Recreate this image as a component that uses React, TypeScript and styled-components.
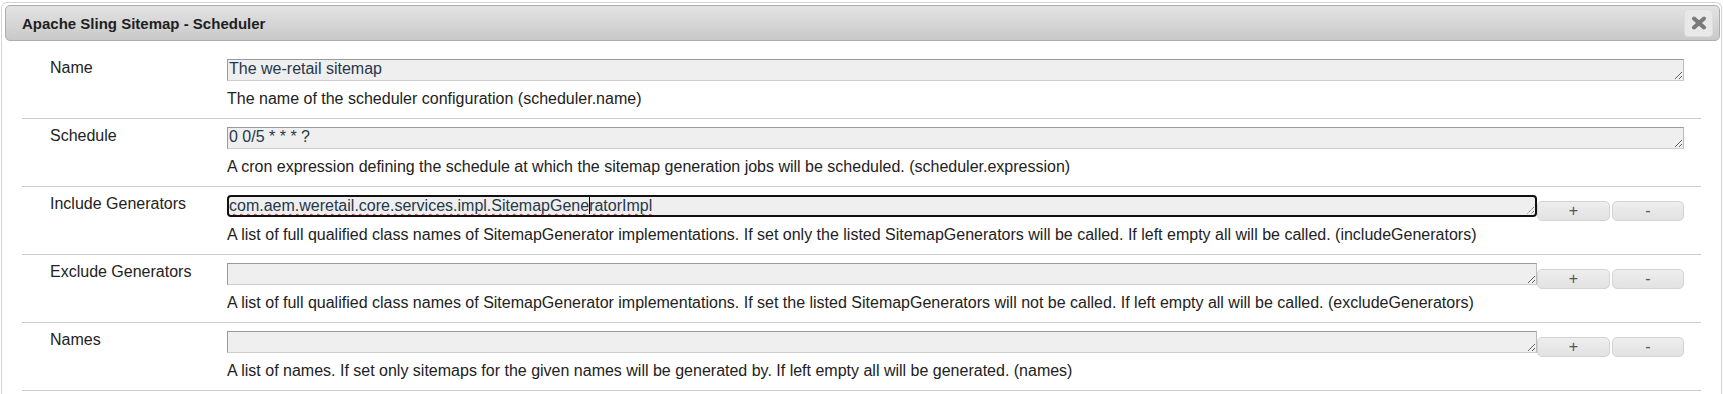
import React from "react";
import styled, { createGlobalStyle } from "styled-components";

const Global = createGlobalStyle`
  html, body { margin: 0; padding: 0; background: #fff; }
  body {
    font-family: "Liberation Sans", Arial, sans-serif;
    width: 1723px;
    height: 394px;
    overflow: hidden;
  }
`;

const Dialog = styled.div`
  box-sizing: border-box;
  width: 1721px;
  height: 392px;
  margin: 2px 1px 0 1px;
  border: 1px solid #d4d4d4;
  border-bottom: none;
  border-radius: 6px 6px 0 0;
  padding: 2px 1px 0 3px;
  background: #fff;
  overflow: hidden;
`;

const TitleBar = styled.div`
  box-sizing: border-box;
  height: 36px;
  display: flex;
  align-items: center;
  justify-content: space-between;
  padding: 0 6px 0 16px;
  border: 1px solid #acacac;
  border-radius: 5px;
  background: linear-gradient(#e3e3e3, #c9c9c9);
`;

const Title = styled.span`
  font-size: 15px;
  font-weight: bold;
  color: #1e1e1e;
`;

const CloseButton = styled.div`
  box-sizing: border-box;
  width: 29px;
  height: 28px;
  display: flex;
  align-items: center;
  justify-content: center;
  border: 1px solid #dcdcdc;
  border-radius: 4px;
  background: #e8e8e8;
`;

const Content = styled.div`
  padding: 10px 19px 0 17px;
`;

const Row = styled.div`
  display: grid;
  grid-template-columns: 205px 1fr;
  padding: 8px 0 10px 0;
  border-bottom: 1px solid #cccccc;
`;

const Label = styled.div`
  padding: 0 0 0 28px;
  font-size: 16px;
  line-height: 18px;
  color: #222;
`;

const ValueCell = styled.div`
  display: flex;
  flex-direction: column;
  padding-right: 16px;
`;

const FieldLine = styled.div`
  display: flex;
  height: 22px;
  align-items: flex-start;
`;

const TextField = styled.textarea<{ $w: number }>`
  box-sizing: border-box;
  width: ${(p) => p.$w}px;
  height: 22px;
  margin: 0;
  padding: 0 1px;
  border: 1px solid;
  border-color: #9a9a9a #bcbcbc #cdcdcd #9a9a9a;
  background: #efefef;
  font-family: "Liberation Sans", Arial, sans-serif;
  font-size: 16px;
  line-height: 18px;
  color: #26384a;
  resize: vertical;
  overflow: hidden;
  white-space: nowrap;
  outline: none;
`;

const FocusedField = styled.div<{ $w: number }>`
  position: relative;
  box-sizing: border-box;
  width: ${(p) => p.$w}px;
  height: 22px;
  padding: 0;
  border: 2px solid #111;
  border-radius: 4px;
  background: #efefef;
  font-size: 16px;
  line-height: 18px;
  color: #26384a;
  white-space: nowrap;
  overflow: hidden;
`;

const Misspelled = styled.span`
  text-decoration: underline wavy #e0201a;
  text-decoration-thickness: 1px;
  text-underline-offset: 2px;
  text-decoration-skip-ink: none;
`;

const Caret = styled.span`
  display: inline-block;
  width: 1px;
  height: 17px;
  margin-right: -1px;
  background: #000;
  vertical-align: -3px;
`;

const Grip = styled.svg`
  position: absolute;
  right: 0;
  bottom: 0;
`;

const SmallButton = styled.button`
  box-sizing: border-box;
  width: 73px;
  height: 20px;
  margin: 6px 0 0 0;
  padding: 0;
  border: 1px solid #d3d3d3;
  border-radius: 5px;
  background: linear-gradient(#eeeeee, #e2e2e2);
  font-family: "Liberation Sans", Arial, sans-serif;
  font-size: 16px;
  line-height: 18px;
  color: #555;
  & + & {
    margin-left: 2px;
    width: 72px;
  }
`;

const Description = styled.div`
  margin-top: 9px;
  font-size: 16px;
  line-height: 18px;
  color: #222;
`;

type Field = {
  label: string;
  value: string;
  desc: string;
  multi?: boolean;
  focused?: boolean;
};

const fields: Field[] = [
  {
    label: "Name",
    value: "The we-retail sitemap",
    desc: "The name of the scheduler configuration (scheduler.name)",
  },
  {
    label: "Schedule",
    value: "0 0/5 * * * ?",
    desc: "A cron expression defining the schedule at which the sitemap generation jobs will be scheduled. (scheduler.expression)",
  },
  {
    label: "Include Generators",
    value: "com.aem.weretail.core.services.impl.SitemapGeneratorImpl",
    desc: "A list of full qualified class names of SitemapGenerator implementations. If set only the listed SitemapGenerators will be called. If left empty all will be called. (includeGenerators)",
    multi: true,
    focused: true,
  },
  {
    label: "Exclude Generators",
    value: "",
    desc: "A list of full qualified class names of SitemapGenerator implementations. If set the listed SitemapGenerators will not be called. If left empty all will be called. (excludeGenerators)",
    multi: true,
  },
  {
    label: "Names",
    value: "",
    desc: "A list of names. If set only sitemaps for the given names will be generated by. If left empty all will be generated. (names)",
    multi: true,
  },
];

const CloseIcon = () => (
  <svg width="16" height="14" viewBox="0 0 16 14">
    <path d="M3 2.5 L13 11.5 M13 2.5 L3 11.5" stroke="#7a7a7a" strokeWidth="4" strokeLinecap="round" />
  </svg>
);

const GripIcon = () => (
  <Grip width="9" height="9" viewBox="0 0 9 9">
    <path d="M8 1 L1 8 M8 5 L5 8" stroke="#4a4a4a" strokeWidth="1" strokeDasharray="1 1" />
  </Grip>
);

const FieldValue = ({ f }: { f: Field }) => {
  const w = f.multi ? 1310 : 1457;
  if (f.focused) {
    const cut = f.value.indexOf("Gener") + 4;
    return (
      <FocusedField $w={w}>
        <Misspelled>
          {f.value.slice(0, cut)}
          <Caret />
          {f.value.slice(cut)}
        </Misspelled>
        <GripIcon />
      </FocusedField>
    );
  }
  return <TextField $w={w} rows={1} readOnly spellCheck={false} defaultValue={f.value} />;
};

export default function App() {
  return (
    <>
      <Global />
      <Dialog>
        <TitleBar>
          <Title>Apache Sling Sitemap - Scheduler</Title>
          <CloseButton>
            <CloseIcon />
          </CloseButton>
        </TitleBar>
        <Content>
          {fields.map((f) => (
            <Row key={f.label}>
              <Label>{f.label}</Label>
              <ValueCell>
                <FieldLine>
                  <FieldValue f={f} />
                  {f.multi && (
                    <>
                      <SmallButton>+</SmallButton>
                      <SmallButton>-</SmallButton>
                    </>
                  )}
                </FieldLine>
                <Description>{f.desc}</Description>
              </ValueCell>
            </Row>
          ))}
        </Content>
      </Dialog>
    </>
  );
}
